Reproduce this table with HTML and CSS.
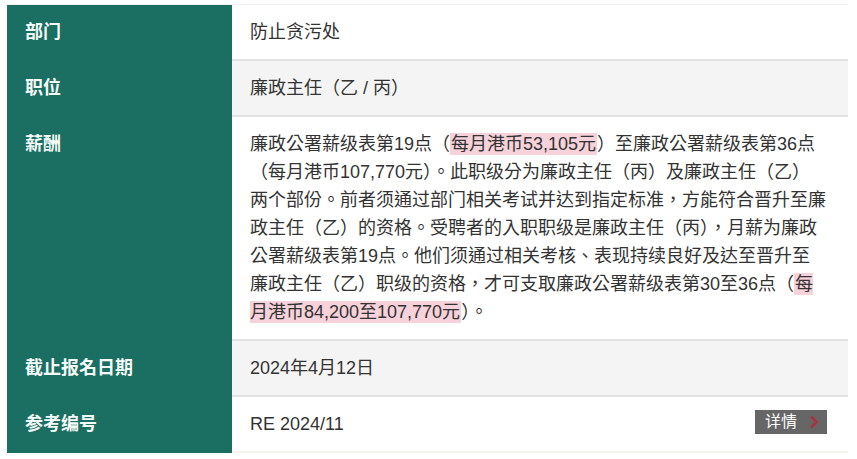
FILE: index.html
```html
<!DOCTYPE html>
<html lang="zh-Hant">
<head>
    <meta charset="UTF-8">
    <meta name="viewport" content="width=device-width, initial-scale=1.0">
    <title>职位详情</title>
    <link rel="stylesheet" href="styles.css">
</head>
<body>
    <div class="job-table">
        <div class="row">
            <div class="label">部门</div>
            <div class="value">防止贪污处</div>
        </div>
        <div class="row alt">
            <div class="label">职位</div>
            <div class="value">廉政主任（乙 / 丙）</div>
        </div>
        <div class="row">
            <div class="label">薪酬</div>
            <div class="value">
                <p class="salary">廉政公署薪级表第19点（<span class="mark">每月港币53,105元</span>）至廉政公署薪级表第36点（每月港币107,770元）。此职级分为廉政主任（丙）及廉政主任（乙）两个部份。前者须通过部门相关考试并达到指定标准，方能符合晋升至廉政主任（乙）的资格。受聘者的入职职级是廉政主任（丙），月薪为廉政公署薪级表第19点。他们须通过相关考核、表现持续良好及达至晋升至廉政主任（乙）职级的资格，才可支取廉政公署薪级表第30至36点（<span class="mark">每月港币84,200至107,770元</span>）。</p>
            </div>
        </div>
        <div class="row alt">
            <div class="label">截止报名日期</div>
            <div class="value">2024年4月12日</div>
        </div>
        <div class="row">
            <div class="label">参考编号</div>
            <div class="value ref">
                <span>RE 2024/11</span>
                <a href="#" class="more">详情
                    <svg width="10" height="14" viewBox="0 0 10 14"><path d="M2 1.5 L7.5 7 L2 12.5" fill="none" stroke="#a8323f" stroke-width="2.6"/></svg>
                </a>
            </div>
        </div>
    </div>
</body>
</html>
```

FILE: styles.css
```css
body {
    margin: 0;
    padding: 4px 9px 7px 7px;
    background: #fff;
    font-family: 'Liberation Sans', 'Noto Sans CJK TC', sans-serif;
    font-size: 18px;
    color: #333;
}

.job-table {
    width: 841px;
    border-top: 1px solid #f0f0f0;
}

.row {
    display: flex;
}

.label {
    width: 225px;
    flex-shrink: 0;
    box-sizing: border-box;
    padding: 13px 18px;
    line-height: 28px;
    background-color: #1b6e62;
    color: #f4fbf8;
    font-weight: bold;
}

.value {
    flex: 1;
    padding: 13px 21px 13px 18px;
    line-height: 28px;
    border-bottom: 2px solid #e2e2e2;
}

.row.alt .value {
    background-color: #f4f4f4;
}

.salary {
    width: 577px;
    margin: 0;
}

.mark {
    background-color: #f7d2da;
    padding: 1px;
}

.ref {
    display: flex;
    justify-content: space-between;
    align-items: center;
    border-bottom-color: #f6f4ec;
}

.more {
    display: flex;
    align-items: center;
    gap: 12px;
    height: 24px;
    padding: 0 8px 0 10px;
    margin-top: -5px;
    background-color: #666;
    color: #fff;
    font-size: 16px;
    text-decoration: none;
}
```
